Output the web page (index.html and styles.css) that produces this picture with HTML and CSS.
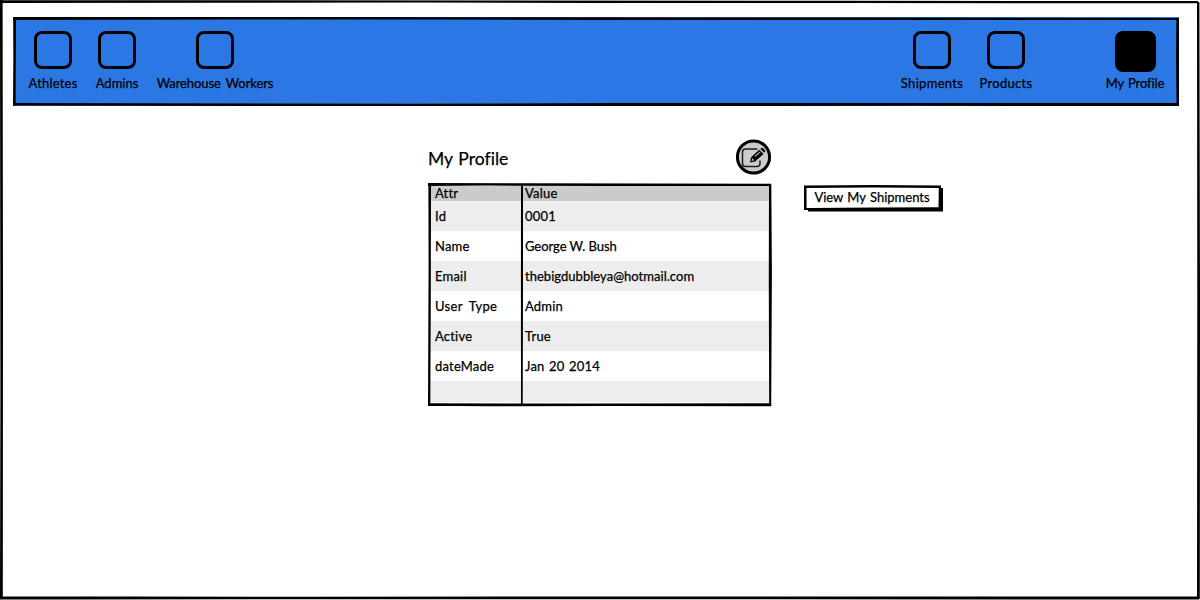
FILE: index.html
```html
<!DOCTYPE html>
<html lang="en">
<head>
<meta charset="utf-8">
<title>My Profile</title>
<link rel="stylesheet" href="styles.css">
</head>
<body>
<div class="frame">
  <svg class="outline" viewBox="0 0 1200 600" preserveAspectRatio="none" aria-hidden="true">
    <path d="M0 0 L500 .4 L850 .8 L1198 1 V3.3 L850 3 L590 3 L420 2.4 L220 2.8 L0 3Z M0 0 H2.6 L3 300 L2.8 598 H0 L.4 400Z M1197 2 H1199.4 L1200 300 L1199.8 599 H1197 L1197.3 300Z M0 596.3 L300 596.7 L700 596.5 L1199 596.5 V599.6 L700 599.2 L60 599.4 H0Z"/>
  </svg>
  <header class="toolbar">
    <svg class="outline" viewBox="0 0 1166 89" preserveAspectRatio="none" aria-hidden="true">
      <path d="M0 0 L500 .2 L850 .6 L1166 1 V3 H580 L420 2.4 L220 2.6 L0 3Z M.4 0 H3 L2.8 45 L2.6 89 H0 L.8 40Z M1163.4 1 H1166 L1166.3 89 H1163.6 L1163 40Z M0 86 L400 86.8 L600 86 L1166 86 V89 L900 88.8 L400 89.2 L0 88.4Z"/>
    </svg>
    <nav class="nav">
      <a class="item athletes"><span class="box"></span><span class="label">Athletes</span></a>
      <a class="item admins"><span class="box"></span><span class="label">Admins</span></a>
      <a class="item workers"><span class="box"></span><span class="label">Warehouse Workers</span></a>
    </nav>
    <nav class="nav">
      <a class="item shipments"><span class="box"></span><span class="label">Shipments</span></a>
      <a class="item products"><span class="box"></span><span class="label">Products</span></a>
      <a class="item profile"><span class="box filled"></span><span class="label">My Profile</span></a>
    </nav>
  </header>
  <main class="content">
    <section class="card">
      <div class="heading">
        <h1 class="title">My Profile</h1>
        <svg class="edit" viewBox="0 0 36 36" role="img" aria-label="Edit">
          <circle cx="17.5" cy="18" r="16.1" fill="#ccc" stroke="#000" stroke-width="3"/>
          <path d="M21.5 10 H9.5 Q6.5 10 6.5 13 V24.5 Q6.5 27.5 9.5 27.5 H21 Q24 27.5 24 24.5 V21.5" fill="none" stroke="#1c1c1c" stroke-width="1.5"/>
          <path d="M14 23.5 L15.1 18.2 L23.3 10.8 L27.5 15 L19.2 22.4Z M24.3 9.9 L25.5 8.9 Q26.3 8.4 27.1 9.2 L28.9 11 Q29.7 11.9 28.9 12.8 L28.2 13.7Z"/>
          <path d="M16.2 19.2 L18.2 21.3 L15.5 22.1Z M18.7 16.9 L23.9 12.5 L24.6 13.1 L19.5 17.7Z" fill="#ccc"/>
        </svg>
      </div>
      <div class="table">
        <div class="row head"><span>Attr</span><span>Value</span></div>
        <div class="row"><span>Id</span><span>0001</span></div>
        <div class="row"><span>Name</span><span class="name">George W. Bush</span></div>
        <div class="row"><span>Email</span><span class="email">thebigdubbleya@hotmail.com</span></div>
        <div class="row"><span class="type">User Type</span><span>Admin</span></div>
        <div class="row"><span>Active</span><span>True</span></div>
        <div class="row"><span>dateMade</span><span class="date">Jan 20 2014</span></div>
        <div class="row last"></div>
        <svg class="outline" viewBox="0 0 344 224" preserveAspectRatio="none" aria-hidden="true">
          <path d="M0 0 L100 .2 L343 .8 V3 H180 L60 2.6 L0 3Z M.4 0 H3 L2.8 110 L2.3 223 H0 L.6 80Z M341 1 H343.3 L343.9 90 L343.2 223 H341.2 L340.8 100Z M0 220.3 L180 220.6 L343.3 220.3 V223.2 L180 223 L60 223.3 L0 222.8Z M93 2 H95 V110 L94.7 221 H93 L92.9 110Z"/>
        </svg>
      </div>
    </section>
    <button class="action" type="button">
      <svg class="outline" viewBox="0 0 140 27" preserveAspectRatio="none" aria-hidden="true">
        <path d="M0 .5 L70 0 L137 .6 V3 H139 V26.6 H4 V25 H0Z"/>
        <path d="M2.5 3 L70 2.4 L134.8 3.1 L134.5 22.2 L70 22.5 L2.6 23.1Z" fill="#fff"/>
      </svg>
      <span class="caption">View My Shipments</span>
    </button>
  </main>
</div>
</body>
</html>
```
FILE: styles.css
```css
* { box-sizing: border-box; }

body {
  margin: 0;
  background: #fff;
  color: #000;
  font: 13px/16px Lato, "Open Sans", sans-serif;
  letter-spacing: .2px;
  -webkit-text-stroke: .25px #000;
}

.frame {
  position: relative;
  width: 1200px;
  height: 600px;
  padding: 17px 21px 0 13px;
  overflow: hidden;
}

.outline {
  position: absolute;
  inset: 0;
  width: 100%;
  height: 100%;
  pointer-events: none;
}

.toolbar {
  position: relative;
  display: flex;
  justify-content: space-between;
  height: 89px;
  padding: 14px 15px 0 16px;
  background: #2b78e4;
}

.nav { display: flex; gap: 19px; }

.item {
  display: flex;
  flex-direction: column;
  align-items: center;
  white-space: nowrap;
}

.athletes { width: 48px; }
.admins { width: 42px; letter-spacing: 0; }
.workers { width: 116px; letter-spacing: -.1px; word-spacing: 2px; }
.shipments { width: 62px; margin-right: -2px; letter-spacing: .3px; }
.products { width: 52px; margin-right: 55px; letter-spacing: .3px; }
.profile { width: 58px; letter-spacing: -.1px; word-spacing: 1px; }

.box {
  width: 38px;
  height: 38px;
  margin-bottom: 6px;
  border: 3px solid #000;
  border-radius: 8px;
}

.box.filled {
  width: 41px;
  height: 41px;
  margin-bottom: 3px;
  background: #000;
}

.content {
  display: flex;
  align-items: flex-start;
  gap: 32px;
  padding: 33px 0 0 415px;
}

.card { width: 344px; }

.heading {
  display: flex;
  justify-content: space-between;
  height: 44px;
}

.title {
  margin: 8px 0 0;
  font-size: 17.5px;
  line-height: 24px;
  font-weight: 400;
  letter-spacing: .05px;
  word-spacing: 1px;
}

.edit { width: 36px; height: 36px; }

.table {
  position: relative;
  height: 224px;
  padding: 3px 2px 0;
}

.row {
  display: grid;
  grid-template-columns: 90px 1fr;
  align-items: center;
  height: 30px;
  padding-left: 5px;
}

.row:nth-child(even) { background: #ededed; }
.row.head { height: 15px; padding-bottom: 1px; background: #cbcbcb; }
.row.last { height: 20px; }

.row.head { line-height: 14px; }
.row.last { height: 19px; box-shadow: 0 1px #ededed; }

.name { letter-spacing: -.05px; }
.email { letter-spacing: .03px; }
.type { word-spacing: 3px; letter-spacing: .3px; }
.date { word-spacing: 1px; }

.action {
  position: relative;
  width: 140px;
  height: 27px;
  margin-top: 46px;
  padding: 0 4px 3px 0;
  border: 0;
  background: none;
  color: inherit;
  font: inherit;
  letter-spacing: 0;
  word-spacing: 1px;
}

.caption { position: relative; }

.row.last { height: 21px; box-shadow: none; }
```
